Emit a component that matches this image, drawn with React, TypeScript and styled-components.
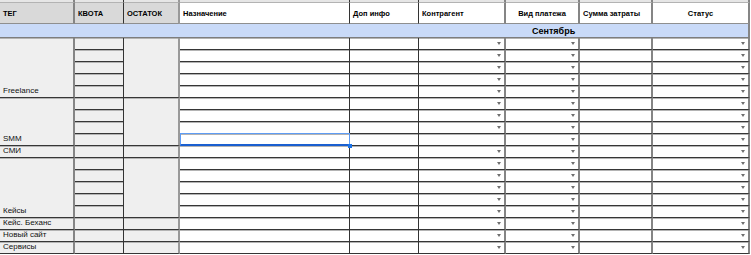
import React from 'react';
import styled, { createGlobalStyle, css } from 'styled-components';

const GlobalStyle = createGlobalStyle`
  html, body { margin: 0; padding: 0; background: #ffffff; }
  body { font-family: "Liberation Sans", Arial, sans-serif; }
`;

const COLS = [75, 49, 56, 170, 69, 87, 74, 73, 97];
const RIGHT = [
  '2px solid #858585',
  '1px solid #333333',
  '2px solid #999999',
  '1px solid #333333',
  '1px solid #333333',
  '2px solid #858585',
  '2px solid #858585',
  '2px solid #858585',
  '2px solid #858585',
];
const ROW_LINE = '1px solid #363636';

type Align = 'left' | 'center';

const Sheet = styled.div`
  display: grid;
  grid-template-columns: ${COLS.map((w) => `${w}px`).join(' ')};
  grid-template-rows: 2px 22px 14px repeat(18, 12px);
  width: 750px;
  font-family: "Liberation Sans", Arial, sans-serif;
  color: #000;
`;

const TopCell = styled.div<{ $col: number }>`
  box-sizing: border-box;
  background: #e6e6e6;
  border-right: ${(p) => RIGHT[p.$col]};
`;

const HeaderCell = styled.div<{ $col: number; $gray?: boolean; $align: Align }>`
  box-sizing: border-box;
  display: flex;
  align-items: center;
  justify-content: ${(p) => (p.$align === 'center' ? 'center' : 'flex-start')};
  padding: 1px 3px 0;
  background: ${(p) => (p.$gray ? '#d9d9d9' : '#ffffff')};
  border-top: 1px solid #b3b3b3;
  border-right: ${(p) => RIGHT[p.$col]};
  border-bottom: 1px solid #8f8f8f;
  font-size: 7.5px;
  font-weight: 700;
  white-space: nowrap;
  overflow: hidden;
`;

const MonthRow = styled.div`
  box-sizing: border-box;
  grid-column: 1 / -1;
  display: flex;
  align-items: center;
  padding-left: 532px;
  background: #c9daf8;
  border-right: 2px solid #858585;
  border-bottom: 1px solid #7d7d7d;
  font-size: 9px;
  font-weight: 700;
`;

const GrayBase = css`
  box-sizing: border-box;
  background: #efefef;
  border-bottom: ${ROW_LINE};
  box-shadow: inset 0 1px 0 #b4b4b4;
`;

const TagCell = styled.div<{ $span: number }>`
  ${GrayBase};
  grid-row: span ${(p) => p.$span};
  display: flex;
  align-items: flex-end;
  padding: 0 3px 1px;
  border-right: ${RIGHT[0]};
  font-size: 8px;
  line-height: 10px;
  color: #111;
  white-space: nowrap;
  overflow: hidden;
`;

const QuotaCell = styled.div`
  ${GrayBase};
  border-right: ${RIGHT[1]};
`;

const RestCell = styled.div<{ $span: number }>`
  ${GrayBase};
  grid-row: span ${(p) => p.$span};
  border-right: ${RIGHT[2]};
`;

const InputCell = styled.div<{ $col: number; $selected?: boolean }>`
  box-sizing: border-box;
  position: relative;
  display: flex;
  align-items: center;
  justify-content: flex-end;
  padding-right: 3px;
  background: #ffffff;
  border-right: ${(p) => RIGHT[p.$col]};
  border-bottom: ${ROW_LINE};
  box-shadow: inset 0 1px 0 #b4b4b4;

  ${(p) =>
    p.$selected &&
    css`
      &::after {
        content: '';
        position: absolute;
        top: -1px;
        left: 0;
        right: -1px;
        bottom: -1px;
        border: 1px solid #5e9cf4;
        border-bottom: 2px solid #1a5fd0;
        pointer-events: none;
      }
      &::before {
        content: '';
        position: absolute;
        right: -3px;
        bottom: -3px;
        width: 4px;
        height: 4px;
        background: #1a73e8;
        z-index: 2;
      }
    `}
`;

const Arrow = styled.span`
  display: block;
  width: 0;
  height: 0;
  border-left: 2.5px solid transparent;
  border-right: 2.5px solid transparent;
  border-top: 3px solid #6f6f6f;
`;

const headers: { label: string; align: Align; gray?: boolean }[] = [
  { label: 'ТЕГ', align: 'left', gray: true },
  { label: 'КВОТА', align: 'left', gray: true },
  { label: 'ОСТАТОК', align: 'left', gray: true },
  { label: 'Назначение', align: 'left' },
  { label: 'Доп инфо', align: 'left' },
  { label: 'Контрагент', align: 'left' },
  { label: 'Вид платежа', align: 'center' },
  { label: 'Сумма затраты', align: 'left' },
  { label: 'Статус', align: 'center' },
];

const groups = [
  { tag: 'Freelance', rows: 5 },
  { tag: 'SMM', rows: 4 },
  { tag: 'СМИ', rows: 1 },
  { tag: 'Кейсы', rows: 5 },
  { tag: 'Кейс. Беханс', rows: 1 },
  { tag: 'Новый сайт', rows: 1 },
  { tag: 'Сервисы', rows: 1 },
];

const SELECTED_ROW = 8;
const ARROW_COLS = [5, 6, 8];

export default function App() {
  const cells: React.ReactNode[] = [];
  let rowIndex = 0;
  groups.forEach((g, gi) => {
    for (let r = 0; r < g.rows; r++) {
      const ri = rowIndex;
      if (r === 0) cells.push(<TagCell key={`t${gi}`} $span={g.rows}>{g.tag}</TagCell>);
      cells.push(<QuotaCell key={`q${ri}`} />);
      if (r === 0) cells.push(<RestCell key={`r${gi}`} $span={g.rows} />);
      for (let c = 3; c < 9; c++) {
        const showArrow = ARROW_COLS.includes(c) && !(c === 5 && ri === SELECTED_ROW);
        cells.push(
          <InputCell key={`c${ri}-${c}`} $col={c} $selected={c === 3 && ri === SELECTED_ROW}>
            {showArrow && <Arrow />}
          </InputCell>
        );
      }
      rowIndex++;
    }
  });

  return (
    <>
      <GlobalStyle />
      <Sheet>
        {COLS.map((_, i) => (
          <TopCell key={`top${i}`} $col={i} />
        ))}
        {headers.map((h, i) => (
          <HeaderCell key={h.label} $col={i} $gray={h.gray} $align={h.align}>
            {h.label}
          </HeaderCell>
        ))}
        <MonthRow>Сентябрь</MonthRow>
        {cells}
      </Sheet>
    </>
  );
}
